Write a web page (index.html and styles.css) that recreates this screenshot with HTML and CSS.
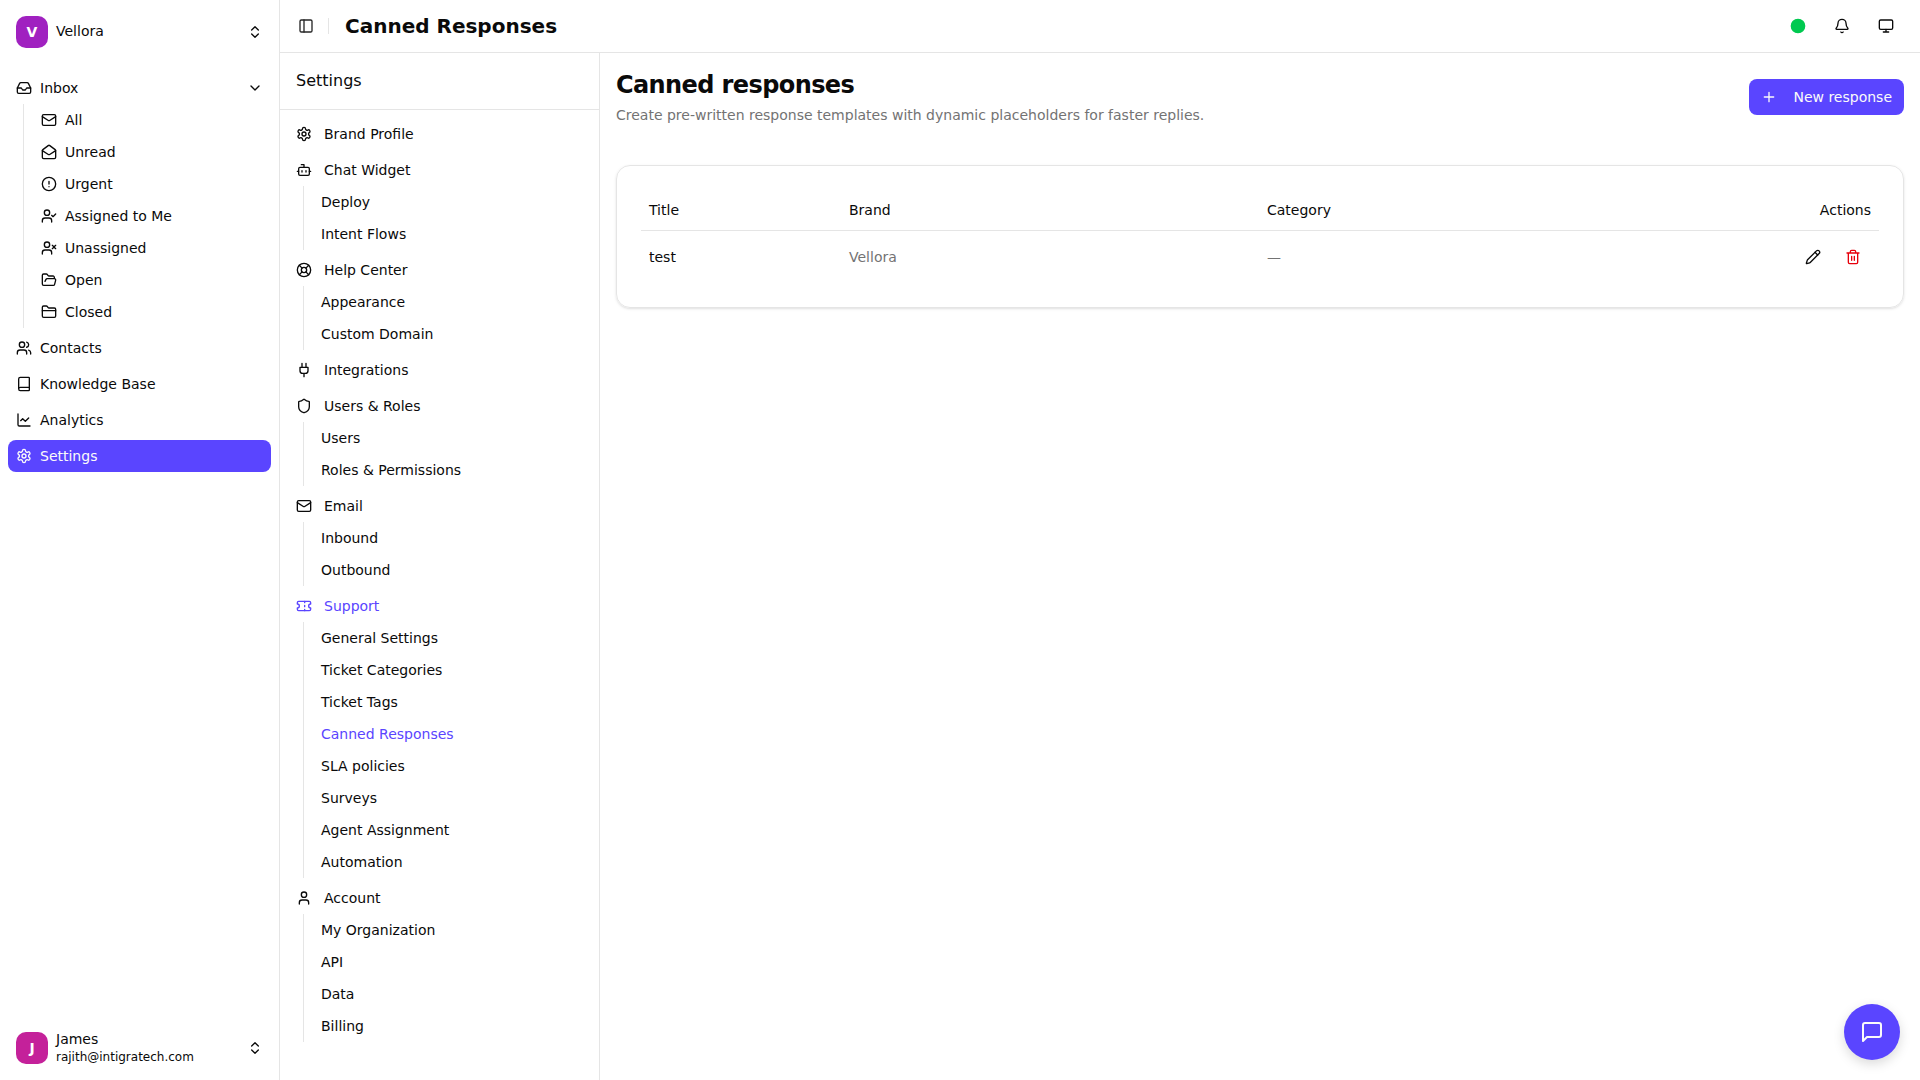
FILE: index.html
```html
<!DOCTYPE html>
<html lang="en">
<head>
<meta charset="utf-8">
<title>Canned Responses</title>
<link rel="stylesheet" href="styles.css">
</head>
<body>
<svg class="sprite" aria-hidden="true">
  <symbol id="updown" viewBox="0 0 24 24"><path d="m7 15 5 5 5-5"/><path d="m7 9 5-5 5 5"/></symbol>
  <symbol id="down" viewBox="0 0 24 24"><path d="m6 9 6 6 6-6"/></symbol>
  <symbol id="inbox" viewBox="0 0 24 24"><path d="M22 12h-6l-2 3h-4l-2-3H2"/><path d="M5.45 5.11 2 12v6a2 2 0 0 0 2 2h16a2 2 0 0 0 2-2v-6l-3.45-6.89A2 2 0 0 0 16.76 4H7.24a2 2 0 0 0-1.79 1.11z"/></symbol>
  <symbol id="mail" viewBox="0 0 24 24"><path d="m22 7-8.991 5.727a2 2 0 0 1-2.009 0L2 7"/><rect x="2" y="4" width="20" height="16" rx="2"/></symbol>
  <symbol id="mail-open" viewBox="0 0 24 24"><path d="M21.2 8.4c.5.38.8.97.8 1.6v10a2 2 0 0 1-2 2H4a2 2 0 0 1-2-2V10a2 2 0 0 1 .8-1.6l8-6a2 2 0 0 1 2.4 0l8 6Z"/><path d="m22 10-8.97 5.7a1.94 1.94 0 0 1-2.06 0L2 10"/></symbol>
  <symbol id="alert" viewBox="0 0 24 24"><circle cx="12" cy="12" r="10"/><path d="M12 8v4M12 16h.01"/></symbol>
  <symbol id="user-check" viewBox="0 0 24 24"><path d="m16 11 2 2 4-4"/><path d="M16 21v-2a4 4 0 0 0-4-4H6a4 4 0 0 0-4 4v2"/><circle cx="9" cy="7" r="4"/></symbol>
  <symbol id="user-x" viewBox="0 0 24 24"><path d="M16 21v-2a4 4 0 0 0-4-4H6a4 4 0 0 0-4 4v2"/><circle cx="9" cy="7" r="4"/><path d="m17 8 5 5M22 8l-5 5"/></symbol>
  <symbol id="folder-open" viewBox="0 0 24 24"><path d="m6 14 1.5-2.9A2 2 0 0 1 9.24 10H20a2 2 0 0 1 1.94 2.5l-1.54 6a2 2 0 0 1-1.95 1.5H4a2 2 0 0 1-2-2V5a2 2 0 0 1 2-2h3.9a2 2 0 0 1 1.69.9l.81 1.2a2 2 0 0 0 1.67.9H18a2 2 0 0 1 2 2v2"/></symbol>
  <symbol id="folder" viewBox="0 0 24 24"><path d="M20 20a2 2 0 0 0 2-2V8a2 2 0 0 0-2-2h-7.9a2 2 0 0 1-1.69-.9L9.6 3.9A2 2 0 0 0 7.93 3H4a2 2 0 0 0-2 2v13a2 2 0 0 0 2 2Z"/><path d="M2 10h20"/></symbol>
  <symbol id="users" viewBox="0 0 24 24"><path d="M16 21v-2a4 4 0 0 0-4-4H6a4 4 0 0 0-4 4v2"/><path d="M16 3.128a4 4 0 0 1 0 7.744"/><path d="M22 21v-2a4 4 0 0 0-3-3.87"/><circle cx="9" cy="7" r="4"/></symbol>
  <symbol id="book" viewBox="0 0 24 24"><path d="M4 19.5v-15A2.5 2.5 0 0 1 6.5 2H19a1 1 0 0 1 1 1v18a1 1 0 0 1-1 1H6.5a1 1 0 0 1 0-5H20"/></symbol>
  <symbol id="chart" viewBox="0 0 24 24"><path d="M3 3v16a2 2 0 0 0 2 2h16"/><path d="m19 9-5 5-4-4-3 3"/></symbol>
  <symbol id="gear" viewBox="0 0 24 24"><path d="M12.22 2h-.44a2 2 0 0 0-2 2v.18a2 2 0 0 1-1 1.73l-.43.25a2 2 0 0 1-2 0l-.15-.08a2 2 0 0 0-2.73.73l-.22.38a2 2 0 0 0 .73 2.73l.15.1a2 2 0 0 1 1 1.72v.51a2 2 0 0 1-1 1.74l-.15.09a2 2 0 0 0-.73 2.73l.22.38a2 2 0 0 0 2.73.73l.15-.08a2 2 0 0 1 2 0l.43.25a2 2 0 0 1 1 1.73V20a2 2 0 0 0 2 2h.44a2 2 0 0 0 2-2v-.18a2 2 0 0 1 1-1.73l.43-.25a2 2 0 0 1 2 0l.15.08a2 2 0 0 0 2.73-.73l.22-.39a2 2 0 0 0-.73-2.73l-.15-.08a2 2 0 0 1-1-1.74v-.5a2 2 0 0 1 1-1.74l.15-.09a2 2 0 0 0 .73-2.73l-.22-.38a2 2 0 0 0-2.73-.73l-.15.08a2 2 0 0 1-2 0l-.43-.25a2 2 0 0 1-1-1.73V4a2 2 0 0 0-2-2z"/><circle cx="12" cy="12" r="3"/></symbol>
  <symbol id="bot" viewBox="0 0 24 24"><path d="M12 8V4H8"/><rect x="4" y="8" width="16" height="12" rx="2"/><path d="M2 14h2M20 14h2M15 13v2M9 13v2"/></symbol>
  <symbol id="lifebuoy" viewBox="0 0 24 24"><circle cx="12" cy="12" r="10"/><path d="m4.93 4.93 4.24 4.24M14.83 9.17l4.24-4.24M14.83 14.83l4.24 4.24M9.17 14.83l-4.24 4.24"/><circle cx="12" cy="12" r="4"/></symbol>
  <symbol id="plug" viewBox="0 0 24 24"><path d="M12 22v-5M9 8V2M15 8V2M18 8v5a4 4 0 0 1-4 4h-4a4 4 0 0 1-4-4V8Z"/></symbol>
  <symbol id="shield" viewBox="0 0 24 24"><path d="M20 13c0 5-3.5 7.5-7.66 8.95a1 1 0 0 1-.67-.01C7.5 20.5 4 18 4 13V6a1 1 0 0 1 1-1c2 0 4.5-1.2 6.24-2.72a1.17 1.17 0 0 1 1.52 0C14.51 3.81 17 5 19 5a1 1 0 0 1 1 1z"/></symbol>
  <symbol id="ticket" viewBox="0 0 24 24"><path d="M2 9a3 3 0 0 1 0 6v2a2 2 0 0 0 2 2h16a2 2 0 0 0 2-2v-2a3 3 0 0 1 0-6V7a2 2 0 0 0-2-2H4a2 2 0 0 0-2 2Z"/><path d="M13 5v2M13 17v2M13 11v2"/></symbol>
  <symbol id="user" viewBox="0 0 24 24"><path d="M19 21v-2a4 4 0 0 0-4-4H9a4 4 0 0 0-4 4v2"/><circle cx="12" cy="7" r="4"/></symbol>
  <symbol id="panel" viewBox="0 0 24 24"><rect x="3" y="3" width="18" height="18" rx="2"/><path d="M9 3v18"/></symbol>
  <symbol id="dot" viewBox="0 0 24 24"><circle cx="12" cy="12" r="10" fill="currentColor"/></symbol>
  <symbol id="bell" viewBox="0 0 24 24"><path d="M10.268 21a2 2 0 0 0 3.464 0"/><path d="M3.262 15.326A1 1 0 0 0 4 17h16a1 1 0 0 0 .74-1.673C19.41 13.956 18 12.499 18 8A6 6 0 0 0 6 8c0 4.499-1.411 5.956-2.738 7.326"/></symbol>
  <symbol id="monitor" viewBox="0 0 24 24"><rect x="2" y="3" width="20" height="14" rx="2"/><path d="M8 21h8M12 17v4"/></symbol>
  <symbol id="plus" viewBox="0 0 24 24"><path d="M5 12h14M12 5v14"/></symbol>
  <symbol id="pencil" viewBox="0 0 24 24"><path d="M21.174 6.812a1 1 0 0 0-3.986-3.987L3.842 16.174a2 2 0 0 0-.5.83l-1.321 4.352a.5.5 0 0 0 .623.622l4.353-1.32a2 2 0 0 0 .83-.497z"/><path d="m15 5 4 4"/></symbol>
  <symbol id="trash" viewBox="0 0 24 24"><path d="M3 6h18M19 6v14c0 1-1 2-2 2H7c-1 0-2-1-2-2V6M8 6V4c0-1 1-2 2-2h4c1 0 2 1 2 2v2M10 11v6M14 11v6"/></symbol>
  <symbol id="message" viewBox="0 0 24 24"><path d="M21 15a2 2 0 0 1-2 2H7l-4 4V5a2 2 0 0 1 2-2h14a2 2 0 0 1 2 2z"/></symbol>
</svg>

<div class="app">
  <aside class="sidebar">
    <div class="account">
      <span class="avatar avatar-brand">V</span>
      <span class="account-name">Vellora</span>
      <svg class="icon"><use href="#updown"/></svg>
    </div>
    <nav class="nav main-nav">
      <div>
        <a class="item"><svg class="icon"><use href="#inbox"/></svg><span class="grow">Inbox</span><svg class="icon"><use href="#down"/></svg></a>
        <div class="sub">
          <a class="item"><svg class="icon"><use href="#mail"/></svg>All</a>
          <a class="item"><svg class="icon"><use href="#mail-open"/></svg>Unread</a>
          <a class="item"><svg class="icon"><use href="#alert"/></svg>Urgent</a>
          <a class="item"><svg class="icon"><use href="#user-check"/></svg>Assigned to Me</a>
          <a class="item"><svg class="icon"><use href="#user-x"/></svg>Unassigned</a>
          <a class="item"><svg class="icon"><use href="#folder-open"/></svg>Open</a>
          <a class="item"><svg class="icon"><use href="#folder"/></svg>Closed</a>
        </div>
      </div>
      <a class="item"><svg class="icon"><use href="#users"/></svg>Contacts</a>
      <a class="item"><svg class="icon"><use href="#book"/></svg>Knowledge Base</a>
      <a class="item"><svg class="icon"><use href="#chart"/></svg>Analytics</a>
      <a class="item selected"><svg class="icon"><use href="#gear"/></svg>Settings</a>
    </nav>
    <div class="account">
      <span class="avatar avatar-user">J</span>
      <span class="account-name">James<small>rajith@intigratech.com</small></span>
      <svg class="icon"><use href="#updown"/></svg>
    </div>
  </aside>

  <div class="page">
    <header class="topbar">
      <svg class="icon toggle"><use href="#panel"/></svg>
      <span class="separator"></span>
      <h1>Canned Responses</h1>
      <div class="tools">
        <span class="icon-button status"><svg class="icon"><use href="#dot"/></svg></span>
        <span class="icon-button"><svg class="icon"><use href="#bell"/></svg></span>
        <span class="icon-button"><svg class="icon"><use href="#monitor"/></svg></span>
      </div>
    </header>

    <div class="body">
      <section class="settings">
        <h2>Settings</h2>
        <nav class="nav settings-nav">
          <a class="item"><svg class="icon"><use href="#gear"/></svg>Brand Profile</a>
          <div>
            <a class="item"><svg class="icon"><use href="#bot"/></svg>Chat Widget</a>
            <div class="sub"><a class="item">Deploy</a><a class="item">Intent Flows</a></div>
          </div>
          <div>
            <a class="item"><svg class="icon"><use href="#lifebuoy"/></svg>Help Center</a>
            <div class="sub"><a class="item">Appearance</a><a class="item">Custom Domain</a></div>
          </div>
          <a class="item"><svg class="icon"><use href="#plug"/></svg>Integrations</a>
          <div>
            <a class="item"><svg class="icon"><use href="#shield"/></svg>Users &amp; Roles</a>
            <div class="sub"><a class="item">Users</a><a class="item">Roles &amp; Permissions</a></div>
          </div>
          <div>
            <a class="item"><svg class="icon"><use href="#mail"/></svg>Email</a>
            <div class="sub"><a class="item">Inbound</a><a class="item">Outbound</a></div>
          </div>
          <div>
            <a class="item current"><svg class="icon"><use href="#ticket"/></svg>Support</a>
            <div class="sub">
              <a class="item">General Settings</a>
              <a class="item">Ticket Categories</a>
              <a class="item">Ticket Tags</a>
              <a class="item current">Canned Responses</a>
              <a class="item">SLA policies</a>
              <a class="item">Surveys</a>
              <a class="item">Agent Assignment</a>
              <a class="item">Automation</a>
            </div>
          </div>
          <div>
            <a class="item"><svg class="icon"><use href="#user"/></svg>Account</a>
            <div class="sub"><a class="item">My Organization</a><a class="item">API</a><a class="item">Data</a><a class="item">Billing</a></div>
          </div>
        </nav>
      </section>

      <main class="content">
        <div class="intro">
          <div>
            <h2>Canned responses</h2>
            <p>Create pre-written response templates with dynamic placeholders for faster replies.</p>
          </div>
          <button class="primary"><svg class="icon"><use href="#plus"/></svg>New response</button>
        </div>
        <div class="card">
          <table>
            <colgroup><col class="col-title"><col class="col-brand"><col class="col-category"><col></colgroup>
            <thead><tr><th>Title</th><th>Brand</th><th>Category</th><th class="right">Actions</th></tr></thead>
            <tbody>
              <tr>
                <td>test</td>
                <td class="muted">Vellora</td>
                <td class="muted">—</td>
                <td>
                  <div class="actions">
                    <span class="icon-button"><svg class="icon"><use href="#pencil"/></svg></span>
                    <span class="icon-button danger"><svg class="icon"><use href="#trash"/></svg></span>
                  </div>
                </td>
              </tr>
            </tbody>
          </table>
        </div>
      </main>
    </div>
  </div>
</div>
<button class="chat" aria-label="Chat"><svg class="icon"><use href="#message"/></svg></button>
</body>
</html>
```
FILE: styles.css
```css
:root {
  --text: #0a0a0a;
  --muted: #737373;
  --border: #e5e5e5;
  --primary: #5a45ff;
}

* { box-sizing: border-box; }

body {
  margin: 0;
  font: 14px/20px "DejaVu Sans", sans-serif;
  color: var(--text);
  background: #fff;
}

h1, h2, p { margin: 0; }

button {
  font: inherit;
  border: 0;
}

.sprite { display: none; }

.icon {
  flex: none;
  display: block;
  width: 16px;
  height: 16px;
  fill: none;
  stroke: currentColor;
  stroke-width: 2;
  stroke-linecap: round;
  stroke-linejoin: round;
}

.app {
  display: flex;
  height: 100vh;
  overflow: hidden;
}

/* Primary sidebar */
.sidebar {
  flex: none;
  display: flex;
  flex-direction: column;
  width: 280px;
  border-right: 1px solid var(--border);
}

.account {
  display: flex;
  align-items: center;
  gap: 8px;
  height: 64px;
  padding: 0 16px;
}

.account-name {
  flex: 1;
  line-height: 17.5px;
}

.account-name small {
  display: block;
  font-size: 12px;
  line-height: 16px;
}

.avatar {
  display: flex;
  align-items: center;
  justify-content: center;
  width: 32px;
  height: 32px;
  border-radius: 10px;
  color: #fff;
  font-weight: 700;
}

.avatar-brand { background: #a021c0; }
.avatar-user { background: #c4219a; }

.nav {
  display: flex;
  flex-direction: column;
  gap: 4px;
  padding: 8px;
}

.main-nav { flex: 1; }

.item {
  display: flex;
  align-items: center;
  gap: 8px;
  height: 32px;
  padding: 0 8px;
  border-radius: 8px;
  white-space: nowrap;
}

.settings-nav .item { gap: 12px; }

.sub {
  margin-left: 15px;
  padding-left: 9px;
  border-left: 1px solid var(--border);
}

.grow { flex: 1; }

.selected {
  background: var(--primary);
  color: #fafafa;
}

.current { color: var(--primary); }

/* Page frame */
.page {
  flex: 1;
  min-width: 0;
  display: flex;
  flex-direction: column;
}

.topbar {
  display: flex;
  align-items: center;
  height: 53px;
  padding: 0 16px 0 18px;
  border-bottom: 1px solid var(--border);
}

.toggle { color: #262626; }

.separator {
  width: 1px;
  height: 16px;
  margin: 0 16px 0 14px;
  background: var(--border);
}

.topbar h1 {
  font-size: 20px;
  line-height: 28px;
}

.tools {
  display: flex;
  gap: 8px;
  margin-left: auto;
}

.icon-button {
  display: flex;
  align-items: center;
  justify-content: center;
  width: 36px;
  height: 36px;
}

.status { color: #00c950; }
.danger { color: #e7000b; }

.body {
  flex: 1;
  min-height: 0;
  display: flex;
}

/* Settings navigation */
.settings {
  flex: none;
  width: 320px;
  border-right: 1px solid var(--border);
}

.settings h2 {
  padding: 16px;
  border-bottom: 1px solid var(--border);
  font-size: 16px;
  font-weight: 400;
  line-height: 24px;
}

/* Content */
.content {
  flex: 1;
  display: flex;
  flex-direction: column;
  gap: 40px;
  padding: 16px;
}

.intro {
  display: flex;
  align-items: center;
  justify-content: space-between;
}

.intro h2 {
  font-size: 24px;
  line-height: 32px;
  letter-spacing: -0.6px;
}

.intro p {
  margin-top: 4px;
  color: var(--muted);
}

.primary {
  display: flex;
  align-items: center;
  gap: 16px;
  height: 36px;
  padding: 0 12px;
  border-radius: 8px;
  background: var(--primary);
  color: #fafafa;
}

.card {
  padding: 24px;
  border: 1px solid var(--border);
  border-radius: 14px;
  box-shadow: 0 1px 3px rgb(0 0 0 / 10%), 0 1px 2px -1px rgb(0 0 0 / 10%);
}

table {
  width: 100%;
  table-layout: fixed;
  border-spacing: 0;
}

.col-title { width: 200px; }
.col-brand { width: 418px; }
.col-category { width: 420px; }

th {
  height: 41px;
  padding: 0 8px;
  border-bottom: 1px solid var(--border);
  font-weight: 400;
  text-align: left;
}

th.right { text-align: right; }

td { padding: 8px; }

.muted { color: var(--muted); }

.actions {
  display: flex;
  justify-content: flex-end;
  gap: 4px;
}

/* Floating chat launcher */
.chat {
  position: fixed;
  right: 20px;
  bottom: 20px;
  display: flex;
  align-items: center;
  justify-content: center;
  width: 56px;
  height: 56px;
  padding: 0;
  border-radius: 50%;
  background: var(--primary);
  color: #fafafa;
  box-shadow: 0 4px 12px rgb(0 0 0 / 15%);
}

.chat .icon {
  width: 24px;
  height: 24px;
}
```
